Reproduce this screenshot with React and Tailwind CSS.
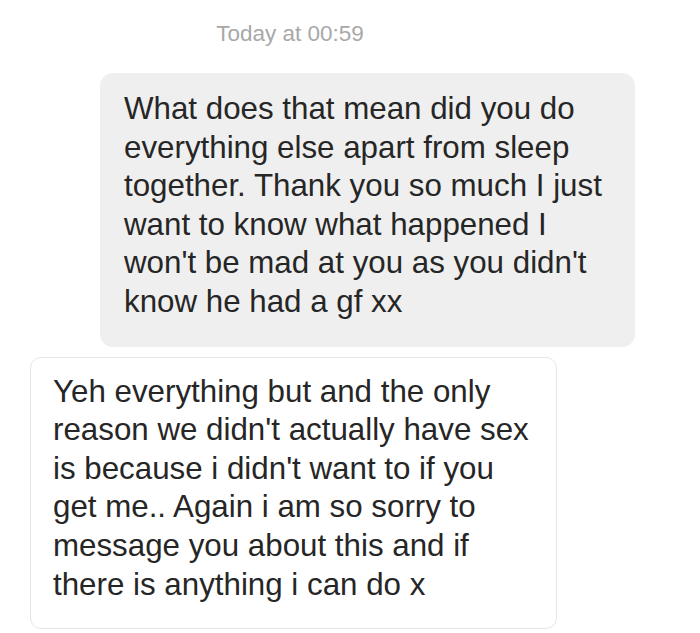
import React from 'react';

const sent = [
  'What does that mean did you do',
  'everything else apart from sleep',
  'together. Thank you so much I just',
  'want to know what happened I',
  "won't be mad at you as you didn't",
  'know he had a gf xx',
];

const received = [
  'Yeh everything but and the only',
  "reason we didn't actually have sex",
  "is because i didn't want to if you",
  'get me.. Again i am so sorry to',
  'message you about this and if',
  'there is anything i can do x',
];

const Lines = ({ lines }) =>
  lines.map((line, i) => (
    <div key={i} className="whitespace-nowrap">
      {line}
    </div>
  ));

export default function App() {
  return (
    <div
      className="w-[700px] h-[633px] bg-white overflow-hidden text-[#262626]"
      style={{ fontFamily: '"Liberation Sans", Arial, sans-serif' }}
    >
      {/* Timestamp */}
      <div className="w-[580px] pt-[21px] text-center text-[22.5px] leading-[26px] text-[#a8a8a8]">
        Today at 00:59
      </div>

      {/* Outgoing message */}
      <div className="mt-[26px] ml-[100px] w-[535px] rounded-[13px] bg-[#efefef] pl-[24px] pt-[17px] pb-[25px] text-[31.3px] leading-[38.6px]">
        <Lines lines={sent} />
      </div>

      {/* Incoming message */}
      <div className="mt-[10px] ml-[30px] w-[527px] rounded-[11px] border border-[#e6e6e6] bg-white pl-[22px] pt-[15px] pb-[24px] text-[31.3px] leading-[38.6px]">
        <Lines lines={received} />
      </div>
    </div>
  );
}
